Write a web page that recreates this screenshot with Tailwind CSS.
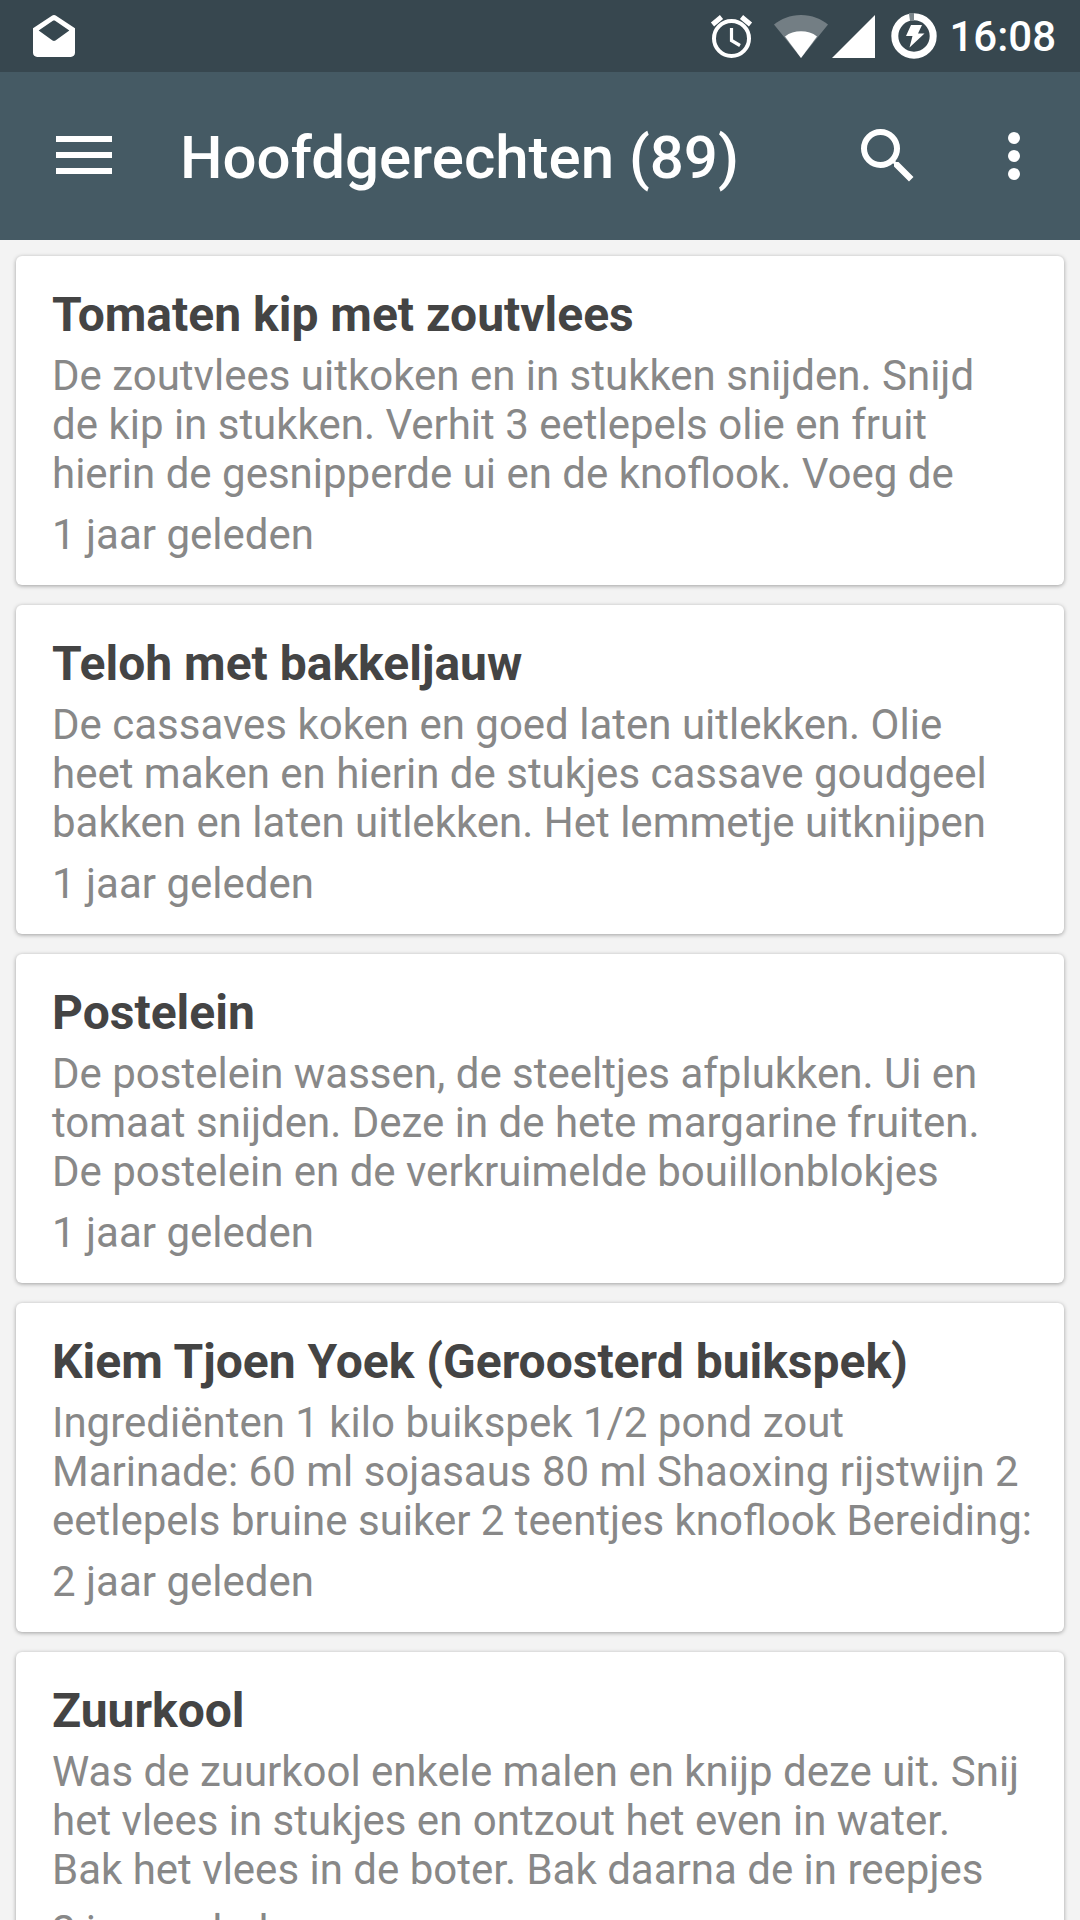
<!DOCTYPE html>
<html lang="nl">
  <head>
    <meta charset="UTF-8" />
    <meta name="viewport" content="width=device-width, initial-scale=1" />
    <title>Hoofdgerechten</title>
    <script src="https://cdn.jsdelivr.net/npm/@tailwindcss/browser@4"></script>
  </head>
  <body class="bg-[#f3f3f3] font-[Roboto,sans-serif] h-screen flex flex-col overflow-hidden">
    <!-- Status bar -->
    <div class="h-[72px] shrink-0 bg-[#37474f] text-white flex items-center pl-[33px] pr-6">
      <svg class="size-[42px]" viewBox="2 2 20 20" fill="currentColor">
        <path fill-rule="evenodd" d="M11 2.3c.6-.4 1.400-.4 2 0l9 6V20c0 1.100-.9 2-2 2H4c-1.100 0-2-.9-2-2V8.300zM4.700 9.400l6.600 4.700c.5.3.9.3 1.400 0l6.600-4.700-6.600-4.500c-.5-.3-.9-.3-1.400 0z" />
      </svg>

      <svg class="size-11 ml-auto" viewBox="0 0 44 44" fill="none" stroke="currentColor">
        <circle cx="21.500" cy="24.500" r="17.500" stroke-width="4" />
        <path d="M21.500 14v12.500l8.500 5" stroke-width="3.200" />
        <path d="M2.500 10.500l9-7.500M31.500 3l9 7.500" stroke-width="5" />
      </svg>
      <svg class="w-[54px] h-[43px] ml-5" viewBox="0 0 54 43" fill="currentColor">
        <path opacity=".3" d="M27 43L0 9.500C7 4 16 0 27 0s20 4 27 9.500z" />
        <path d="M27 43L11 21.500c4.500-3.600 10-5.200 16-5.200s11.500 1.600 16 5.200z" />
      </svg>
      <svg class="size-[43px] ml-1" viewBox="0 0 43 43" fill="currentColor">
        <path d="M43 0v43H0z" />
      </svg>
      <svg class="size-[46px] ml-4" viewBox="0 0 46 46">
        <circle cx="23" cy="23" r="19.200" fill="none" stroke="white" stroke-width="7" />
        <path d="M17.900 0h5.100v8h-4z" fill="#7b868b" />
        <path d="M20 12h11l-4 8.500h6.500L18.500 34.500l3-11.500H15z" fill="white" />
      </svg>
      <span class="ml-3 text-[42px] leading-[49px] font-medium">16:08</span>
    </div>

    <!-- Toolbar -->
    <header class="h-[168px] shrink-0 bg-[#455a64] text-white flex items-center pl-12 pr-[30px]">
      <button type="button" aria-label="Menu" class="shrink-0">
        <svg class="size-[72px]" viewBox="0 0 72 72" fill="currentColor">
          <path d="M8 16h56v6H8zM8 32h56v6H8zM8 48h56v6H8z" />
        </svg>
      </button>
      <h1 class="ml-15 pt-1 grow text-[60px] leading-[70px] font-medium">Hoofdgerechten (89)</h1>
      <button type="button" aria-label="Zoeken" class="shrink-0">
        <svg class="size-[72px]" viewBox="0 0 24 24" fill="currentColor">
          <path d="M15.500 14h-.79l-.28-.27A6.471 6.471 0 0 0 16 9.500 6.500 6.500 0 1 0 9.500 16c1.610 0 3.090-.59 4.230-1.570l.27.28v.79l5 4.990L20.490 19l-4.990-5zm-6 0C7.010 14 5 11.990 5 9.500S7.010 5 9.500 5 14 7.010 14 9.500 11.990 14 9.500 14z" />
        </svg>
      </button>
      <button type="button" aria-label="Meer opties" class="shrink-0 ml-[54px]">
        <svg class="size-[72px]" viewBox="0 0 24 24" fill="currentColor">
          <circle cx="12" cy="6" r="2" />
          <circle cx="12" cy="12" r="2" />
          <circle cx="12" cy="18" r="2" />
        </svg>
      </button>
    </header>

    <!-- Recipe list -->
    <main class="grow overflow-hidden flex flex-col gap-5 px-4 pt-4">
      <article class="shrink-0 bg-white rounded-md shadow-[0_1px_4px_rgba(0,0,0,0.35)] pl-9 pr-6 pt-[31px] pb-[26px]">
        <h2 class="text-[48px] leading-[56px] font-bold text-[#444444]">Tomaten kip met zoutvlees</h2>
        <p class="mt-2 text-[42px] leading-[49px] text-[#888888]">
          De zoutvlees uitkoken en in stukken snijden. Snijd<br />
          de kip in stukken. Verhit 3 eetlepels olie en fruit<br />
          hierin de gesnipperde ui en de knoflook. Voeg de
        </p>
        <p class="mt-3 text-[42px] leading-[49px] text-[#888888]">1 jaar geleden</p>
      </article>

      <article class="shrink-0 bg-white rounded-md shadow-[0_1px_4px_rgba(0,0,0,0.35)] pl-9 pr-6 pt-[31px] pb-[26px]">
        <h2 class="text-[48px] leading-[56px] font-bold text-[#444444]">Teloh met bakkeljauw</h2>
        <p class="mt-2 text-[42px] leading-[49px] text-[#888888]">
          De cassaves koken en goed laten uitlekken. Olie<br />
          heet maken en hierin de stukjes cassave goudgeel<br />
          bakken en laten uitlekken. Het lemmetje uitknijpen
        </p>
        <p class="mt-3 text-[42px] leading-[49px] text-[#888888]">1 jaar geleden</p>
      </article>

      <article class="shrink-0 bg-white rounded-md shadow-[0_1px_4px_rgba(0,0,0,0.35)] pl-9 pr-6 pt-[31px] pb-[26px]">
        <h2 class="text-[48px] leading-[56px] font-bold text-[#444444]">Postelein</h2>
        <p class="mt-2 text-[42px] leading-[49px] text-[#888888]">
          De postelein wassen, de steeltjes afplukken. Ui en<br />
          tomaat snijden. Deze in de hete margarine fruiten.<br />
          De postelein en de verkruimelde bouillonblokjes
        </p>
        <p class="mt-3 text-[42px] leading-[49px] text-[#888888]">1 jaar geleden</p>
      </article>

      <article class="shrink-0 bg-white rounded-md shadow-[0_1px_4px_rgba(0,0,0,0.35)] pl-9 pr-6 pt-[31px] pb-[26px]">
        <h2 class="text-[48px] leading-[56px] font-bold text-[#444444]">Kiem Tjoen Yoek (Geroosterd buikspek)</h2>
        <p class="mt-2 text-[42px] leading-[49px] text-[#888888]">
          Ingrediënten 1 kilo buikspek 1/2 pond zout<br />
          Marinade: 60 ml sojasaus 80 ml Shaoxing rijstwijn 2<br />
          eetlepels bruine suiker 2 teentjes knoflook Bereiding:
        </p>
        <p class="mt-3 text-[42px] leading-[49px] text-[#888888]">2 jaar geleden</p>
      </article>

      <article class="shrink-0 bg-white rounded-md shadow-[0_1px_4px_rgba(0,0,0,0.35)] pl-9 pr-6 pt-[31px] pb-[26px]">
        <h2 class="text-[48px] leading-[56px] font-bold text-[#444444]">Zuurkool</h2>
        <p class="mt-2 text-[42px] leading-[49px] text-[#888888]">
          Was de zuurkool enkele malen en knijp deze uit. Snij<br />
          het vlees in stukjes en ontzout het even in water.<br />
          Bak het vlees in de boter. Bak daarna de in reepjes
        </p>
        <p class="mt-3 text-[42px] leading-[49px] text-[#888888]">2 jaar geleden</p>
      </article>
    </main>
  </body>
</html>
